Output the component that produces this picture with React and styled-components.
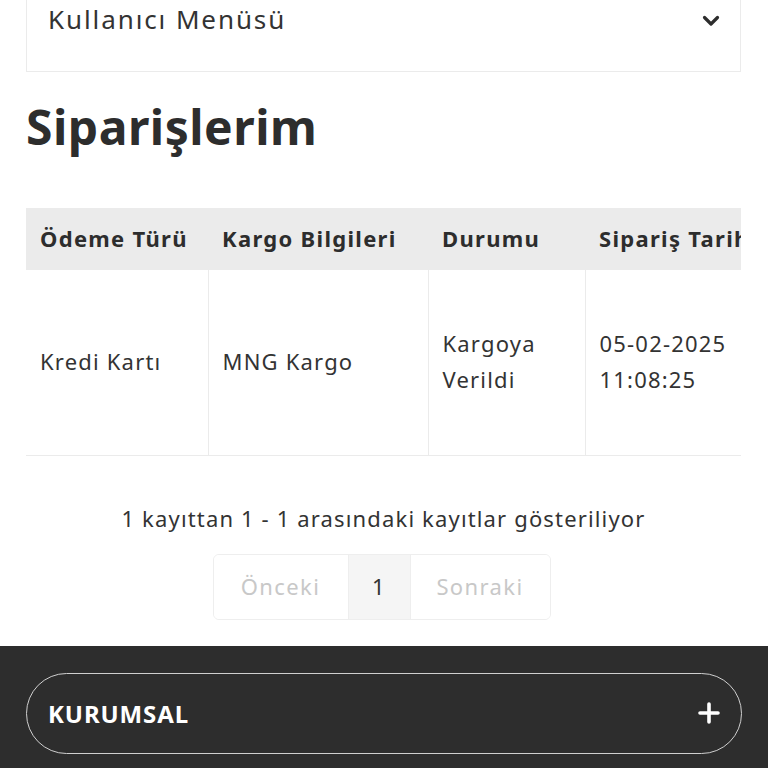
import React from "react";
import styled, { createGlobalStyle } from "styled-components";

const GlobalStyle = createGlobalStyle`
  html, body {
    margin: 0;
    padding: 0;
    background: #ffffff;
    font-family: "Noto Sans", "Open Sans", Arial, sans-serif;
    color: #333333;
  }
  * { box-sizing: border-box; }
`;

const Page = styled.div`
  width: 768px;
  height: 768px;
  overflow: hidden;
  display: flex;
  flex-direction: column;
`;

const Content = styled.main`
  padding: 0 27px 0 26px;
  margin-top: -30px;
  display: flex;
  flex-direction: column;
`;

const MenuCard = styled.div`
  height: 102px;
  border: 1px solid #ebebeb;
  border-top: none;
  display: flex;
  align-items: center;
  justify-content: space-between;
  padding: 0 19px 0 21px;
`;

const MenuTitle = styled.span`
  font-size: 26px;
  font-weight: 400;
  color: #333;
  letter-spacing: 1.9px;
  margin-top: -3px;
`;

const Title = styled.h1`
  margin: 23px 0 0 0;
  font-size: 48px;
  line-height: 64px;
  font-weight: 700;
  color: #2d2d2d;
  letter-spacing: 0.5px;
`;

const TableWrap = styled.div`
  margin-top: 49px;
  overflow: hidden;
  width: 715px;
`;

const Table = styled.table`
  border-collapse: collapse;
  width: 860px;
  table-layout: fixed;
`;

const HeadCell = styled.th`
  width: ${p => p.w}px;
  height: 62px;
  background: #ebebeb;
  text-align: left;
  padding: 0 14px 3px 14px;
  font-size: 22px;
  font-weight: 700;
  color: #2d2d2d;
  white-space: nowrap;
  letter-spacing: 1.3px;
`;

const Cell = styled.td`
  height: 185px;
  padding: 0 14px 2px 14px;
  font-size: 22px;
  line-height: 36px;
  color: #333;
  vertical-align: middle;
  letter-spacing: 1.2px;
  border-right: 1px solid #ebebeb;
  border-bottom: 1px solid #ebebeb;
`;

const Info = styled.p`
  margin: 46px 0 0 0;
  text-align: center;
  font-size: 22px;
  line-height: 32px;
  color: #333;
  letter-spacing: 1.15px;
`;

const Pager = styled.nav`
  align-self: center;
  margin: 20px 4px 0 0;
  display: flex;
  border: 1px solid #eeeeee;
  border-radius: 6px;
  overflow: hidden;
`;

const PageItem = styled.span`
  width: ${p => p.w}px;
  height: 64px;
  padding-bottom: 2px;
  display: flex;
  align-items: center;
  justify-content: center;
  font-size: 22px;
  letter-spacing: 1.4px;
  color: ${p => (p.active ? "#333" : "#c8c8c8")};
  background: ${p => (p.active ? "#f5f5f5" : "#fff")};
  border-left: ${p => (p.first ? "none" : "1px solid #eeeeee")};
`;

const Footer = styled.footer`
  margin-top: 26px;
  flex: 1;
  background: #2d2d2d;
  padding: 27px 26px 0 26px;
`;

const Accordion = styled.div`
  height: 81px;
  border: 1.5px solid #cfcfcf;
  border-radius: 41px;
  display: flex;
  align-items: center;
  justify-content: space-between;
  padding: 0 20px 0 21px;
`;

const AccordionTitle = styled.span`
  font-size: 24px;
  font-weight: 700;
  color: #fff;
  letter-spacing: 0.9px;
`;

const Chevron = () => (
  <svg width="20" height="20" viewBox="0 0 20 20">
    <path d="M3.5 6.5 L10 13 L16.5 6.5" fill="none" stroke="#2d2d2d" strokeWidth="3.2" strokeLinecap="round" strokeLinejoin="round" />
  </svg>
);

const Plus = () => (
  <svg width="24" height="24" viewBox="0 0 24 24">
    <path d="M12 3 V21 M3 12 H21" stroke="#fff" strokeWidth="3.6" strokeLinecap="round" />
  </svg>
);

export default function App() {
  return (
    <Page>
      <GlobalStyle />
      <Content>
        <MenuCard>
          <MenuTitle>Kullanıcı Menüsü</MenuTitle>
          <Chevron />
        </MenuCard>

        <Title>Siparişlerim</Title>

        <TableWrap>
          <Table>
            <thead>
              <tr>
                <HeadCell w={182}>Ödeme Türü</HeadCell>
                <HeadCell w={220}>Kargo Bilgileri</HeadCell>
                <HeadCell w={157}>Durumu</HeadCell>
                <HeadCell w={301}>Sipariş Tarihi</HeadCell>
              </tr>
            </thead>
            <tbody>
              <tr>
                <Cell>Kredi Kartı</Cell>
                <Cell>MNG Kargo</Cell>
                <Cell>Kargoya<br />Verildi</Cell>
                <Cell>05-02-2025<br />11:08:25</Cell>
              </tr>
            </tbody>
          </Table>
        </TableWrap>

        <Info>1 kayıttan 1 - 1 arasındaki kayıtlar gösteriliyor</Info>

        <Pager>
          <PageItem w={134} first>Önceki</PageItem>
          <PageItem w={62} active>1</PageItem>
          <PageItem w={140}>Sonraki</PageItem>
        </Pager>
      </Content>

      <Footer>
        <Accordion>
          <AccordionTitle>KURUMSAL</AccordionTitle>
          <Plus />
        </Accordion>
      </Footer>
    </Page>
  );
}
